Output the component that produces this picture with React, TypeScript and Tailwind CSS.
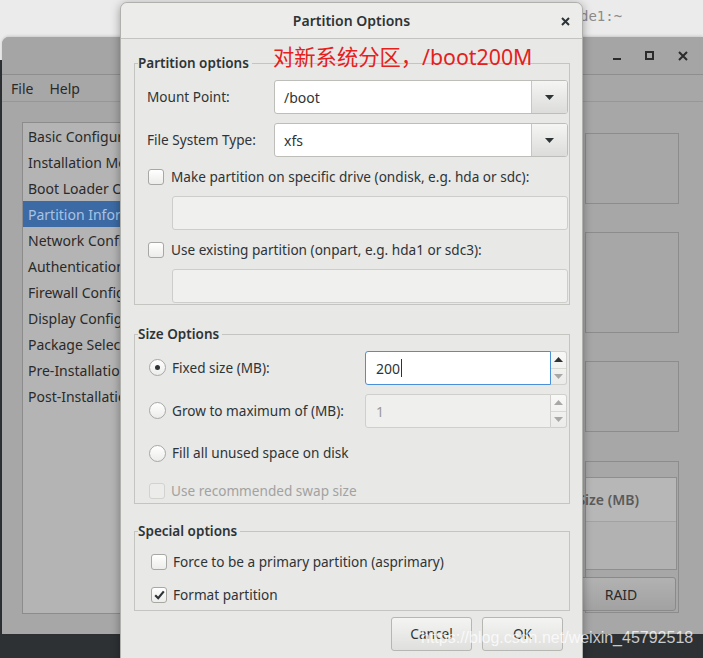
import React from 'react';

// Small drawings used by the GTK-style widgets
function Caret({ color = '#2e3436' }: { color?: string }) {
    return (
        <svg width="9" height="5" viewBox="0 0 9 5">
            <path d="M0 0h9L4.5 5z" fill={color} />
        </svg>
    );
}

function CaretUp({ color = '#2e3436' }: { color?: string }) {
    return (
        <svg width="9" height="5" viewBox="0 0 9 5">
            <path d="M0 5h9L4.5 0z" fill={color} />
        </svg>
    );
}

function Combo({ value }: { value: string }) {
    return (
        <div className="flex h-[34px] flex-1 overflow-hidden rounded-[3px] border border-[#bdbdb9] bg-white">
            <div className="flex flex-1 items-center pl-[9px] text-[14px] text-[#2e3436]">{value}</div>
            <div className="flex w-[36px] items-center justify-center border-l border-[#c6c6c2] bg-linear-to-b from-[#f5f5f4] to-[#dcdcda]">
                <Caret />
            </div>
        </div>
    );
}

function Entry() {
    return <div className="h-[34px] flex-1 rounded-[3px] border border-[#cdcdc9] bg-[#f0f0ef]" />;
}

function Spin({ value, focused }: { value: string; focused?: boolean }) {
    return (
        <div className="flex h-[34px] w-[202px]">
            <div
                className={`flex flex-1 items-center rounded-l-[3px] border pl-[10px] text-[14px] ${
                    focused ? 'border-[#4a90d9] bg-white text-[#2e3436]' : 'border-[#cfcfcb] bg-[#efefee] text-[#9a9a98]'
                }`}
            >
                {value}
                {focused && <span className="ml-[1px] h-[18px] w-[1px] bg-[#2e3436]" />}
            </div>
            <div className="flex w-[16px] flex-col overflow-hidden rounded-r-[3px] border border-l-0 border-[#cfcfcb] bg-linear-to-b from-[#f8f8f7] to-[#ebebea]">
                <div className="flex flex-1 items-center justify-center border-b border-[#d8d8d5]">
                    <CaretUp color={focused ? '#2e3436' : '#a8a8a6'} />
                </div>
                <div className="flex flex-1 items-center justify-center">
                    <Caret color="#a8a8a6" />
                </div>
            </div>
        </div>
    );
}

function Check({ checked, disabled }: { checked?: boolean; disabled?: boolean }) {
    return (
        <div
            className={`flex h-[16px] w-[16px] shrink-0 items-center justify-center rounded-[3px] border ${
                disabled ? 'border-[#d2d2cf] bg-[#ececeb]' : 'border-[#a7a7a4] bg-linear-to-b from-white to-[#ececea]'
            }`}
        >
            {checked && (
                <svg width="11" height="10" viewBox="0 0 11 10">
                    <path d="M1.2 5.2l3 3L9.8 1.4" fill="none" stroke="#2e3436" strokeWidth="2.2" />
                </svg>
            )}
        </div>
    );
}

function Radio({ checked }: { checked?: boolean }) {
    return (
        <div className="flex h-[17px] w-[17px] shrink-0 items-center justify-center rounded-full border border-[#a7a7a4] bg-linear-to-b from-white to-[#ececea]">
            {checked && <div className="h-[5px] w-[5px] rounded-full bg-[#2e3436]" />}
        </div>
    );
}

function Frame({ title, className, children }: { title: string; className?: string; children: React.ReactNode }) {
    return (
        <fieldset className={`border border-[#c4c4c0] ${className ?? ''}`}>
            <legend className="ml-[3px] pr-[3px] text-[13.5px] font-semibold leading-[20px] text-[#2e3436]">{title}</legend>
            {children}
        </fieldset>
    );
}

const sidebarItems = [
    'Basic Configuration',
    'Installation Method',
    'Boot Loader Options',
    'Partition Information',
    'Network Configuration',
    'Authentication',
    'Firewall Configuration',
    'Display Configuration',
    'Package Selection',
    'Pre-Installation Script',
    'Post-Installation Script',
];

export default function App() {
    return (
        <div className="relative h-[658px] w-[703px] overflow-hidden bg-[#2d3134] font-['Noto_Sans','Open_Sans','Noto_Sans_CJK_SC',sans-serif]">
            {/* terminal window behind */}
            <div className="absolute left-0 top-0 flex h-[60px] w-[703px] items-start bg-[#ebebeb] pl-[580px] pt-[6px]">
                <span className="font-['DejaVu_Sans_Mono',monospace] text-[14px] text-[#8c8c8c]">de1:~</span>
            </div>

            {/* Kickstart main window (dimmed) */}
            <div className="absolute left-[2px] top-[37px] flex h-[597px] w-[701px] flex-col overflow-hidden rounded-tl-[7px] bg-[#a7a7a7] text-[#2a2a2a] shadow-[0_-1px_3px_rgba(0,0,0,0.15)]">
                <div className="flex h-[38px] shrink-0 items-center justify-end border-b border-[#8e8e8e] bg-[#a5a5a5] pr-[4px]">
                    <div className="flex w-[33px] justify-center pt-[6px]">
                        <div className="h-[2px] w-[8px] bg-[#2b2b2b]" />
                    </div>
                    <div className="flex w-[33px] justify-center">
                        <div className="h-[9px] w-[9px] border-2 border-[#2b2b2b]" />
                    </div>
                    <div className="flex w-[33px] justify-center">
                        <svg width="10" height="10" viewBox="0 0 10 10">
                            <path d="M1 1l8 8M9 1l-8 8" stroke="#2b2b2b" strokeWidth="2" />
                        </svg>
                    </div>
                </div>
                <div className="flex h-[27px] shrink-0 items-center gap-[16px] border-b border-[#979797] pl-[9px] text-[14px]">
                    <span>File</span>
                    <span>Help</span>
                </div>
                <div className="flex flex-1 pb-[20px] pl-[20px] pr-[24px] pt-[20px]">
                    <div className="flex w-[480px] flex-col border border-[#8c8c8c] bg-[#b4b4b4] text-[14px]">
                        {sidebarItems.map((item, i) => (
                            <div
                                key={item}
                                className={`flex h-[26px] items-center whitespace-nowrap pl-[5px] ${
                                    i === 3 ? 'bg-[#3b6aa4] text-[#a9c3e4]' : ''
                                }`}
                            >
                                {item}
                            </div>
                        ))}
                    </div>
                    <div className="ml-auto flex w-[94px] flex-col pt-[11px]">
                        <div className="h-[71px] border border-[#8c8c8c]" />
                        <div className="mt-[28px] h-[101px] border border-[#8c8c8c]" />
                        <div className="mt-[28px] h-[71px] border border-[#8c8c8c]" />
                        <div className="mt-[29px] flex h-[152px] flex-col border border-[#8c8c8c] pr-[1px] pt-[15px]">
                            <div className="flex h-[93px] flex-col border border-l-0 border-[#8e8e8e]">
                                <div className="flex h-[44px] items-center justify-end whitespace-nowrap border-b border-[#a2a2a2] bg-[#b7b7b7] pr-[37px] text-[14px] font-semibold text-[#5a5a5a]">
                                    Size (MB)
                                </div>
                                <div className="flex-1 bg-[#b2b2b2]" />
                            </div>
                            <div className="-ml-[20px] mr-[1px] mt-[7px] flex h-[34px] items-center justify-center rounded-[3px] border border-[#8a8a8a] bg-linear-to-b from-[#b2b2b2] to-[#a2a2a2] text-[14px] text-[#2a2a2a]">
                                RAID
                            </div>
                        </div>
                    </div>
                </div>
            </div>

            {/* Partition Options dialog */}
            <div className="absolute left-[120px] top-[2px] flex h-[690px] w-[463px] flex-col rounded-t-[7px] border border-[#b0b0ad] bg-[#e8e8e7] text-[#2e3436] shadow-[0_2px_10px_rgba(0,0,0,0.35)]">
                <div className="relative flex h-[36px] shrink-0 items-center justify-center rounded-t-[7px] border-b border-[#c3c3c0] bg-[#ececeb]">
                    <span className="text-[14px] font-semibold">Partition Options</span>
                    <svg className="absolute right-[12px] top-[14px]" width="9" height="9" viewBox="0 0 9 9">
                        <path d="M1 1l7 7M8 1l-7 7" stroke="#2e3436" strokeWidth="2" />
                    </svg>
                </div>

                <div className="flex flex-col pl-[13px] pr-[12px] text-[13.6px]">
                    <Frame title="Partition options" className="mt-[14px]">
                        <div className="flex flex-col pb-[1px] pl-[12px] pr-[1px] pt-[7px]">
                            <div className="flex items-center">
                                <span className="w-[127px]">Mount Point:</span>
                                <Combo value="/boot" />
                            </div>
                            <div className="mt-[9px] flex items-center">
                                <span className="w-[127px]">File System Type:</span>
                                <Combo value="xfs" />
                            </div>
                            <div className="mt-[10px] flex h-[20px] items-center gap-[7px] pl-[1px]">
                                <Check />
                                <span>Make partition on specific drive (ondisk, e.g. hda or sdc):</span>
                            </div>
                            <div className="mt-[9px] flex pl-[25px]">
                                <Entry />
                            </div>
                            <div className="mt-[10px] flex h-[20px] items-center gap-[7px] pl-[1px]">
                                <Check />
                                <span>Use existing partition (onpart, e.g. hda1 or sdc3):</span>
                            </div>
                            <div className="mt-[9px] flex pl-[25px]">
                                <Entry />
                            </div>
                        </div>
                    </Frame>

                    <Frame title="Size Options" className="mt-[19px]">
                        <div className="flex flex-col pb-[2px] pl-[14px] pr-[1px] pt-[7px]">
                            <div className="flex items-center">
                                <div className="flex w-[216px] items-center gap-[6px]">
                                    <Radio checked />
                                    <span>Fixed size (MB):</span>
                                </div>
                                <Spin value="200" focused />
                            </div>
                            <div className="mt-[9px] flex items-center">
                                <div className="flex w-[216px] items-center gap-[6px]">
                                    <Radio />
                                    <span>Grow to maximum of (MB):</span>
                                </div>
                                <Spin value="1" />
                            </div>
                            <div className="mt-[15px] flex h-[20px] items-center gap-[6px]">
                                <Radio />
                                <span>Fill all unused space on disk</span>
                            </div>
                            <div className="mt-[18px] flex h-[20px] items-center gap-[6px]">
                                <Check disabled />
                                <span className="text-[#a2a2a0]">Use recommended swap size</span>
                            </div>
                        </div>
                    </Frame>

                    <Frame title="Special options" className="mt-[17px]">
                        <div className="flex flex-col pb-[5px] pl-[16px] pt-[11px]">
                            <div className="flex h-[20px] items-center gap-[6px]">
                                <Check />
                                <span>Force to be a primary partition (asprimary)</span>
                            </div>
                            <div className="mt-[13px] flex h-[20px] items-center gap-[6px]">
                                <Check checked />
                                <span>Format partition</span>
                            </div>
                        </div>
                    </Frame>

                    <div className="mt-[6px] flex justify-end gap-[10px] pr-[7px]">
                        <div className="flex h-[34px] w-[81px] items-center justify-center rounded-[3px] border border-[#b6b6b3] bg-linear-to-b from-[#f4f4f3] to-[#dfdfdd]">
                            Cancel
                        </div>
                        <div className="flex h-[34px] w-[81px] items-center justify-center rounded-[3px] border border-[#b6b6b3] bg-linear-to-b from-[#f4f4f3] to-[#dfdfdd]">
                            OK
                        </div>
                    </div>
                </div>
            </div>

            {/* red annotation over the screenshot */}
            <div className="absolute left-[273px] top-[43px] text-[21.3px] leading-[28px] text-[#e3211d]">
                对新系统分区，/boot200M
            </div>

            {/* watermark */}
            <div className="absolute left-[421px] top-[628px] font-['Liberation_Sans',Arial,sans-serif] text-[16px] leading-[20px] text-white/75">
                https://blog.csdn.net/weixin_45792518
            </div>
        </div>
    );
}
